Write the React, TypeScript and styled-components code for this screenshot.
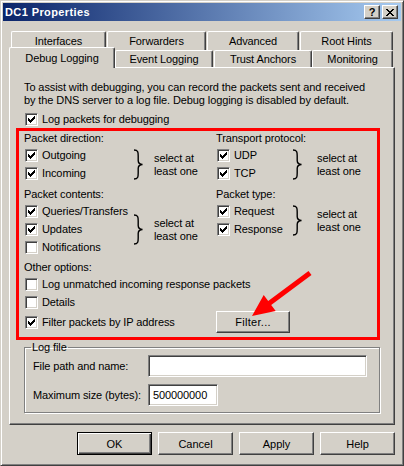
import React from "react";
import styled, { createGlobalStyle } from "styled-components";

const FACE = "#d4d0c8";

const GlobalStyle = createGlobalStyle`
  html, body { margin: 0; padding: 0; background: ${FACE}; }
  body {
    font-family: "Liberation Sans", Arial, sans-serif;
    font-size: 11px;
    color: #000;
  }
  * { box-sizing: border-box; }
`;

const Window = styled.div`
  width: 404px;
  height: 466px;
  background: ${FACE};
  border: 1px solid;
  border-color: ${FACE} #404040 #404040 ${FACE};
  box-shadow: inset 1px 1px #fff, inset -1px -1px #808080;
  padding: 2px;
  display: flex;
  flex-direction: column;
  font-family: "Liberation Sans", Arial, sans-serif;
  font-size: 11px;
  letter-spacing: -0.1px;
`;

const TitleBar = styled.div`
  height: 18px;
  flex: none;
  background: linear-gradient(to right, #0a246a, #a6caf0);
  display: flex;
  align-items: center;
  padding: 0 3px 0 2px;
`;

const Title = styled.span`
  color: #fff;
  font-weight: bold;
  font-size: 11px;
  letter-spacing: 0.4px;
`;

const CaptionButtons = styled.div`
  margin-left: auto;
  display: flex;
  gap: 2px;
`;

const CaptionButton = styled.div`
  width: 16px;
  height: 14px;
  background: ${FACE};
  border: 1px solid;
  border-color: #fff #404040 #404040 #fff;
  box-shadow: inset -1px -1px #808080;
  display: flex;
  align-items: center;
  justify-content: center;
  font-weight: bold;
  font-size: 11px;
  line-height: 12px;
  letter-spacing: 0;
`;

const TabsArea = styled.div`
  margin: 10px 6px 0;
  display: flex;
  flex-direction: column;
`;

const TabRowBack = styled.div`
  display: flex;
  gap: 1px;
  padding-left: 2px;
  height: 19px;
`;

const TabRowFront = styled.div`
  display: flex;
  align-items: flex-end;
  height: 17px;
`;

const Tab = styled.div<{ $w: number; $ml?: number; $selected?: boolean }>`
  width: ${(p) => p.$w}px;
  margin-left: ${(p) => p.$ml ?? 0}px;
  height: ${(p) => (p.$selected ? "21px" : "100%")};
  margin-bottom: ${(p) => (p.$selected ? "-1px" : "0")};
  position: ${(p) => (p.$selected ? "relative" : "static")};
  z-index: ${(p) => (p.$selected ? 1 : 0)};
  background: ${FACE};
  border-top: 1px solid #fff;
  border-left: 1px solid #fff;
  border-right: 1px solid #404040;
  border-top-left-radius: 2px;
  border-top-right-radius: 2px;
  box-shadow: inset -1px 0 #808080;
  display: flex;
  align-items: center;
  justify-content: center;
  white-space: nowrap;
`;

const Panel = styled.div`
  height: 358px;
  border: 1px solid;
  border-color: #fff #404040 #404040 #fff;
  box-shadow: inset -1px -1px #808080;
  padding: 0 0 0 6px;
  display: flex;
  flex-direction: column;
`;

const Description = styled.p`
  margin: 13px 0 0;
  padding-left: 8px;
  line-height: 13px;
`;

const CheckRow = styled.label<{ $indent?: number }>`
  display: flex;
  align-items: center;
  gap: 4px;
  height: 18px;
  padding-left: ${(p) => p.$indent ?? 1}px;
  white-space: nowrap;
`;

const Box = styled.span`
  width: 13px;
  height: 13px;
  flex: none;
  background: #fff;
  border: 1px solid;
  border-color: #808080 #fff #fff #808080;
  box-shadow: inset 1px 1px #404040, inset -1px -1px ${FACE};
  display: flex;
  align-items: center;
  justify-content: center;
`;

const CHECK = [
  "......X",
  ".....XX",
  "X...XXX",
  "XX.XXX.",
  "XXXXX..",
  ".XXX...",
  "..X....",
];

const Check: React.FC<{ on?: boolean }> = ({ on }) => (
  <Box>
    {on && (
      <svg width="7" height="7" viewBox="0 0 7 7" shapeRendering="crispEdges">
        {CHECK.flatMap((row, y) =>
          row.split("").map((c, x) =>
            c === "X" ? <rect key={`${x}-${y}`} x={x} y={y} width="1" height="1" fill="#000" /> : null
          )
        )}
      </svg>
    )}
  </Box>
);

const CheckItem: React.FC<{ on?: boolean; label: string; indent?: number }> = ({ on, label, indent }) => (
  <CheckRow $indent={indent}>
    <Check on={on} />
    <span>{label}</span>
  </CheckRow>
);

const RedBox = styled.div`
  position: relative;
  width: 364px;
  height: 212px;
  border: 3px solid #f00;
  padding: 0 0 0 5px;
  display: flex;
  flex-direction: column;
`;

const TwoCol = styled.div<{ $mt?: number }>`
  display: grid;
  grid-template-columns: 192px 1fr;
  align-items: center;
  margin-top: ${(p) => p.$mt ?? 0}px;
`;

const Column = styled.div`
  display: flex;
  flex-direction: column;
  align-self: start;
`;

const GroupLabel = styled.div<{ $mt?: number; $h?: number }>`
  height: ${(p) => p.$h ?? 15}px;
  line-height: ${(p) => p.$h ?? 15}px;
  margin-top: ${(p) => p.$mt ?? 0}px;
`;

const SelectGroup = styled.div`
  display: flex;
  align-items: center;
`;

const Checks = styled.div<{ $w: number }>`
  width: ${(p) => p.$w}px;
  display: flex;
  flex-direction: column;
`;

const Note = styled.div<{ $gap: number }>`
  margin-left: ${(p) => p.$gap}px;
  line-height: 13px;
  padding-top: 2px;
`;

const Brace: React.FC = () => (
  <svg width="12" height="31" viewBox="0 0 12 31">
    <path
      d="M2 1 C6 1 6.2 3 6.2 7 L6.2 11.5 C6.2 14 7 15.3 10.5 15.5 C7 15.7 6.2 17 6.2 19.5 L6.2 24 C6.2 28 6 30 2 30"
      fill="none"
      stroke="#000"
      strokeWidth="1.4"
    />
  </svg>
);

const FilterButton = styled.button`
  width: 74px;
  height: 22px;
  padding: 0;
  background: ${FACE};
  border: 1px solid;
  border-color: #fff #404040 #404040 #fff;
  box-shadow: inset -1px -1px #808080;
  font: inherit;
  letter-spacing: 0.3px;
  color: #000;
`;

const Arrow = styled.svg`
  position: absolute;
  left: 226px;
  top: 134px;
`;

const LogGroup = styled.fieldset`
  margin: 1px 0 0 8px;
  width: 356px;
  padding: 0 8px 6px;
  border: 1px solid #808080;
  box-shadow: inset 1px 1px #fff, 1px 1px #fff;
  display: flex;
  flex-direction: column;
  gap: 7px;
`;

const Legend = styled.legend`
  padding: 0 1px;
  margin-left: -2px;
  line-height: 13px;
`;

const FieldRow = styled.div<{ $mt?: number }>`
  display: flex;
  align-items: center;
  margin-top: ${(p) => p.$mt ?? 0}px;
`;

const FieldLabel = styled.span`
  width: 115px;
  flex: none;
`;

const TextBox = styled.div<{ $w: number }>`
  width: ${(p) => p.$w}px;
  height: 22px;
  background: #fff;
  border: 1px solid;
  border-color: #808080 #fff #fff #808080;
  box-shadow: inset 1px 1px #404040, inset -1px -1px ${FACE};
  padding: 0 4px;
  display: flex;
  align-items: center;
`;

const ButtonRow = styled.div`
  margin-top: 7px;
  padding-right: 6px;
  display: flex;
  justify-content: flex-end;
  gap: 6px;
`;

const DialogButton = styled.button<{ $default?: boolean }>`
  width: 75px;
  height: 23px;
  padding: 0;
  background: ${FACE};
  font: inherit;
  color: #000;
  border: 1px solid;
  border-color: ${(p) => (p.$default ? "#000" : "#fff #404040 #404040 #fff")};
  box-shadow: ${(p) =>
    p.$default
      ? "inset 1px 1px #fff, inset -1px -1px #404040, inset -2px -2px #808080"
      : "inset -1px -1px #808080"};
`;

export default function App() {
  return (
    <>
      <GlobalStyle />
      <Window>
        <TitleBar>
          <Title>DC1 Properties</Title>
          <CaptionButtons>
            <CaptionButton>?</CaptionButton>
            <CaptionButton>
              <svg width="8" height="7" viewBox="0 0 8 7" shapeRendering="crispEdges">
                <path d="M0 0h2v1h-2zM6 0h2v1h-2zM1 1h2v1h-2zM5 1h2v1h-2zM2 2h4v1h-4zM3 3h2v1h-2zM2 4h4v1h-4zM1 5h2v1h-2zM5 5h2v1h-2zM0 6h2v1h-2zM6 6h2v1h-2z" fill="#000" />
              </svg>
            </CaptionButton>
          </CaptionButtons>
        </TitleBar>

        <TabsArea>
          <TabRowBack>
            <Tab $w={95}>Interfaces</Tab>
            <Tab $w={99}>Forwarders</Tab>
            <Tab $w={92}>Advanced</Tab>
            <Tab $w={93}>Root Hints</Tab>
          </TabRowBack>
          <TabRowFront>
            <Tab $w={106} $selected>Debug Logging</Tab>
            <Tab $w={98}>Event Logging</Tab>
            <Tab $w={98} $ml={1}>Trust Anchors</Tab>
            <Tab $w={81}>Monitoring</Tab>
          </TabRowFront>
          <Panel>
            <Description>
              To assist with debugging, you can record the packets sent and received
              <br />
              by the DNS server to a log file. Debug logging is disabled by default.
            </Description>
            <CheckRow $indent={9} style={{ marginTop: 3 }}>
              <Check on />
              <span>Log packets for debugging</span>
            </CheckRow>

            <RedBox>
              <TwoCol>
                <Column>
                  <GroupLabel>Packet direction:</GroupLabel>
                  <SelectGroup>
                    <Checks $w={108}>
                      <CheckItem on label="Outgoing" />
                      <CheckItem on label="Incoming" />
                    </Checks>
                    <Brace />
                    <Note $gap={10}>select at<br />least one</Note>
                  </SelectGroup>
                </Column>
                <Column>
                  <GroupLabel>Transport protocol:</GroupLabel>
                  <SelectGroup>
                    <Checks $w={75}>
                      <CheckItem on label="UDP" />
                      <CheckItem on label="TCP" />
                    </Checks>
                    <Brace />
                    <Note $gap={14}>select at<br />least one</Note>
                  </SelectGroup>
                </Column>
              </TwoCol>

              <TwoCol $mt={5}>
                <Column>
                  <GroupLabel>Packet contents:</GroupLabel>
                  <SelectGroup>
                    <Checks $w={108}>
                      <CheckItem on label="Queries/Transfers" />
                      <CheckItem on label="Updates" />
                      <CheckItem label="Notifications" />
                    </Checks>
                    <Brace />
                    <Note $gap={10}>select at<br />least one</Note>
                  </SelectGroup>
                </Column>
                <Column>
                  <GroupLabel>Packet type:</GroupLabel>
                  <SelectGroup>
                    <Checks $w={75}>
                      <CheckItem on label="Request" />
                      <CheckItem on label="Response" />
                    </Checks>
                    <Brace />
                    <Note $gap={14}>select at<br />least one</Note>
                  </SelectGroup>
                </Column>
              </TwoCol>

              <GroupLabel $mt={3} $h={16}>Other options:</GroupLabel>
              <CheckItem label="Log unmatched incoming response packets" />
              <CheckItem label="Details" />
              <TwoCol>
                <CheckItem on label="Filter packets by IP address" />
                <div>
                  <FilterButton>Filter...</FilterButton>
                </div>
              </TwoCol>

              <Arrow width="75" height="60" viewBox="0 0 75 60">
                <polygon
                  points="7,51 30.7,45.9 26.2,39.9 66.5,10 63.5,6 23.2,35.9 18.7,29.9"
                  fill="#f00"
                />
              </Arrow>
            </RedBox>

            <LogGroup>
              <Legend>Log file</Legend>
              <FieldRow $mt={1}>
                <FieldLabel>File path and name:</FieldLabel>
                <TextBox $w={219} />
              </FieldRow>
              <FieldRow>
                <FieldLabel>Maximum size (bytes):</FieldLabel>
                <TextBox $w={70}>500000000</TextBox>
              </FieldRow>
            </LogGroup>
          </Panel>
        </TabsArea>

        <ButtonRow>
          <DialogButton $default>OK</DialogButton>
          <DialogButton>Cancel</DialogButton>
          <DialogButton>Apply</DialogButton>
          <DialogButton>Help</DialogButton>
        </ButtonRow>
      </Window>
    </>
  );
}
